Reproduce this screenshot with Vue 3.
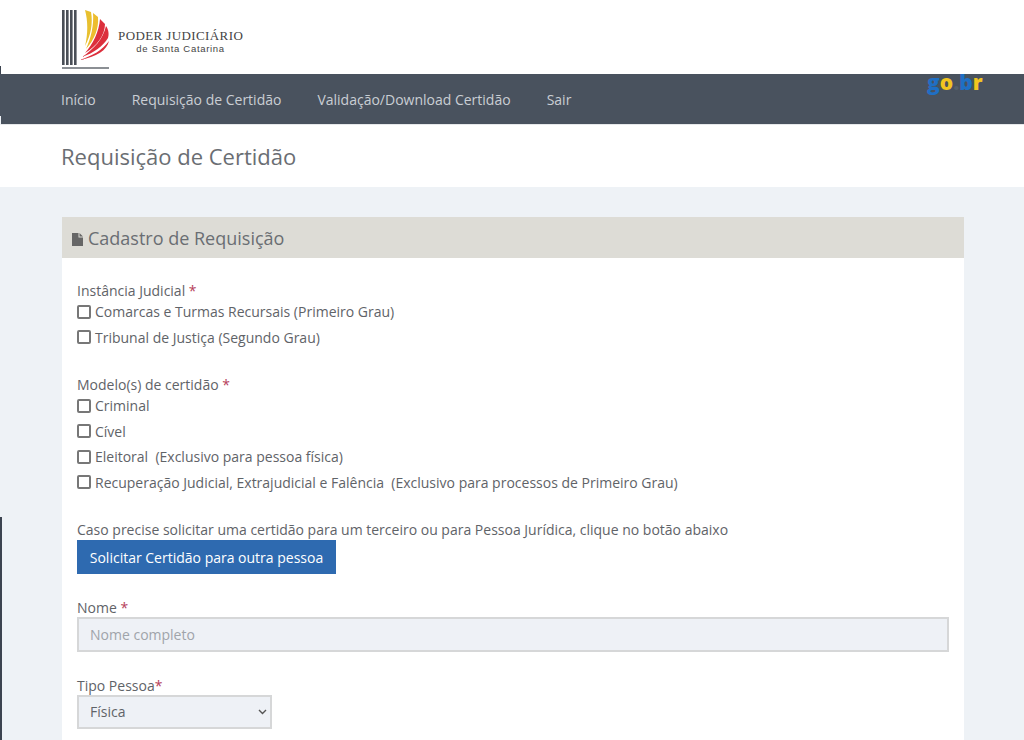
<template>
  <div class="page">
    <span class="edge edge-top"></span>
    <span class="edge edge-mid"></span>
    <span class="edge edge-bottom"></span>

    <header class="brand">
      <svg class="brand-mark" width="50" height="62" viewBox="0 0 50 62">
        <rect x="1" y="1" width="2.6" height="55" fill="#4a4f57" />
        <rect x="5" y="1" width="2.6" height="55" fill="#4a4f57" />
        <rect x="9" y="1" width="2.6" height="55" fill="#4a4f57" />
        <rect x="13" y="1" width="2.6" height="55" fill="#4a4f57" />
        <rect x="1" y="58" width="47" height="2" fill="#8b8f94" />
        <path d="M24 1 L30 3 C32 14 30 26 24 37 C27 25 27 12 24 1Z" fill="#e8c02f" />
        <path d="M32 4 L37 8 C38 20 33 31 25 40 C30 29 33 16 32 4Z" fill="#edbd2e" />
        <path d="M39 10 L44 15 C44 26 36 37 24 44 C32 35 38 23 39 10Z" fill="#dc2f3c" />
        <path d="M45 17 C48 21 48 26 47 29 C42 37 33 44 21 48 C33 40 42 30 45 17Z" fill="#dc2f3c" />
        <path d="M48 32 C46 41 36 48 18 51 C32 47 41 41 48 32Z" fill="#dc2f3c" />
      </svg>
      <div class="brand-text">
        <div class="brand-title">PODER JUDICIÁRIO</div>
        <div class="brand-sub">de Santa Catarina</div>
      </div>
    </header>

    <nav class="nav">
      <a v-for="item in menu" :key="item" class="nav-link">{{ item }}</a>
      <span class="gov"><i class="blue">g</i><i class="yellow">o</i><i class="dot">.</i><i class="blue">b</i><i class="yellow">r</i></span>
    </nav>

    <div class="title-bar">
      <h1>Requisição de Certidão</h1>
    </div>

    <main class="content">
      <section class="card">
        <div class="card-head">
          <svg width="11" height="13" viewBox="0 0 11 13">
            <path d="M0 0H6.5V4.5H11V13H0Z M7.5 0L11 3.5H7.5Z" fill="#666" />
          </svg>
          <h2>Cadastro de Requisição</h2>
        </div>

        <form class="card-body">
          <div class="group">
            <div class="label">Instância Judicial <b>*</b></div>
            <label v-for="opt in instancias" :key="opt" class="check">
              <input type="checkbox" />
              <span>{{ opt }}</span>
            </label>
          </div>

          <div class="group">
            <div class="label">Modelo(s) de certidão <b>*</b></div>
            <label v-for="opt in modelos" :key="opt" class="check">
              <input type="checkbox" />
              <span>{{ opt }}</span>
            </label>
          </div>

          <div class="other">
            <div class="label">Caso precise solicitar uma certidão para um terceiro ou para Pessoa Jurídica, clique no botão abaixo</div>
            <button type="button" class="btn">Solicitar Certidão para outra pessoa</button>
          </div>

          <div class="field">
            <div class="label">Nome <b>*</b></div>
            <input class="input" type="text" placeholder="Nome completo" />
          </div>

          <div class="field">
            <div class="label">Tipo Pessoa<b>*</b></div>
            <div class="select">
              <span>Física</span>
              <svg width="9" height="6" viewBox="0 0 9 6">
                <path d="M1 1L4.5 4.5L8 1" fill="none" stroke="#555" stroke-width="1.4" />
              </svg>
            </div>
          </div>
        </form>
      </section>
    </main>
  </div>
</template>

<script setup>
const menu = ['Início', 'Requisição de Certidão', 'Validação/Download Certidão', 'Sair']
const instancias = ['Comarcas e Turmas Recursais (Primeiro Grau)', 'Tribunal de Justiça (Segundo Grau)']
const modelos = [
  'Criminal',
  'Cível',
  'Eleitoral  (Exclusivo para pessoa física)',
  'Recuperação Judicial, Extrajudicial e Falência  (Exclusivo para processos de Primeiro Grau)'
]
</script>

<style>
html, body {
  margin: 0;
  overflow: hidden;
}
</style>

<style scoped>
.page {
  position: relative;
  height: 740px;
  overflow: hidden;
  display: flex;
  flex-direction: column;
  background: #eef2f6;
  font-family: "Open Sans", sans-serif;
  font-size: 14px;
  color: #5f6368;
}

.edge {
  position: absolute;
  left: 0;
  width: 1px;
  background: #3c4450;
}
.edge-top { top: 66px; height: 8px; }
.edge-mid { top: 74px; height: 42px; background: #49525e; }
.edge-bottom { top: 517px; bottom: 0; width: 2px; }

.brand {
  height: 74px;
  flex: none;
  display: flex;
  align-items: center;
  padding-left: 61px;
  background: #fff;
  box-sizing: border-box;
}
.brand-mark {
  margin-top: 6px;
  flex: none;
}
.brand-text {
  margin-left: 7px;
  margin-top: 10px;
  text-align: center;
  color: #444;
}
.brand-title {
  font-family: "Liberation Serif", serif;
  font-size: 13px;
  letter-spacing: 0.4px;
  line-height: 14px;
}
.brand-sub {
  font-family: "Liberation Sans", sans-serif;
  font-size: 9.5px;
  letter-spacing: 0.7px;
  line-height: 12px;
}

.nav {
  position: relative;
  height: 51px;
  flex: none;
  display: flex;
  align-items: center;
  gap: 36px;
  margin-left: 1px;
  padding-left: 60px;
  background: #49525e;
  border-bottom: 1px solid #e6e8ea;
  box-sizing: border-box;
}
.nav-link {
  color: #c9ced4;
  font-size: 14px;
  padding-top: 1px;
}
.gov {
  position: absolute;
  left: 926px;
  top: -6px;
  font-family: "Open Sans", sans-serif;
  font-size: 21px;
  font-weight: 800;
}
.gov i { font-style: normal; }
.gov .blue { color: #1f6fc4; }
.gov .yellow { color: #f2c61f; }
.gov .dot { color: #55606c; }

.title-bar {
  height: 62px;
  flex: none;
  display: flex;
  align-items: center;
  padding: 0 0 0 61px;
  background: #fff;
  box-sizing: border-box;
}
.title-bar h1 {
  margin: 0;
  font-size: 22px;
  font-weight: 400;
  color: #6a6e73;
}

.content {
  flex: 1;
  padding: 30px 60px 0 62px;
}
.card {
  height: 100%;
  background: #fff;
}
.card-head {
  height: 41px;
  display: flex;
  align-items: center;
  gap: 5px;
  padding-left: 10px;
  background: #dddcd6;
}
.card-head svg {
  margin-top: 3px;
}
.card-head h2 {
  margin: 0;
  font-size: 18px;
  font-weight: 400;
  color: #6a6e73;
}

.card-body {
  display: flex;
  flex-direction: column;
  padding: 24px 15px 0;
}
.label {
  line-height: 17px;
}
.label b {
  font-weight: 400;
  color: #b5405a;
}
.group {
  display: flex;
  flex-direction: column;
  margin-bottom: 26px;
}
.check {
  display: flex;
  align-items: center;
  height: 25.5px;
  white-space: pre;
}
.check input {
  appearance: none;
  width: 14px;
  height: 14px;
  margin: 0 4px 0 0;
  border: 2px solid #777;
  border-radius: 2px;
  box-sizing: border-box;
  background: #fff;
}
.other {
  margin-bottom: 24.5px;
}
.btn {
  display: block;
  height: 34px;
  width: 259px;
  margin-top: 2px;
  border: 0;
  padding: 0;
  background: #2e6ab0;
  color: #fff;
  font: inherit;
}
.field {
  margin-bottom: 24.5px;
}
.input {
  display: block;
  width: 100%;
  height: 35px;
  margin-top: 1.5px;
  padding: 0 11px;
  border: 2px solid #d6d7d8;
  background: #eef1f6;
  box-sizing: border-box;
  font: inherit;
  outline: 0;
}
.input::placeholder {
  color: #a0a4aa;
}
.select {
  width: 195px;
  height: 34px;
  margin-top: 1px;
  display: flex;
  align-items: center;
  justify-content: space-between;
  padding: 0 3px 0 11px;
  border: 2px solid #d6d7d8;
  background: #eef1f6;
  box-sizing: border-box;
}
</style>
